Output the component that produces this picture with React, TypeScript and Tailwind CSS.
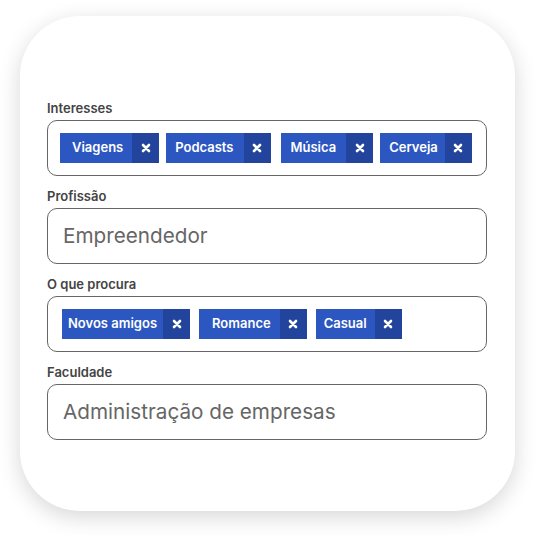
import React from "react";

const X = () => (
  <svg width="10" height="10" viewBox="0 0 10 10">
    <path d="M2 2 L8 8 M8 2 L2 8" stroke="white" strokeWidth="2.6" strokeLinecap="round" />
  </svg>
);

function Tag({ label, pl, pr }: { label: string; pl: string; pr: string }) {
  return (
    <div className="flex h-[30px] items-stretch">
      <div className={`flex items-center bg-[#2c57c1] text-white text-[13px] font-semibold ${pl} ${pr}`}>
        {label}
      </div>
      <div className="flex w-[27px] items-center justify-center bg-[#22449c]">
        <X />
      </div>
    </div>
  );
}

function Label({ children }: { children: React.ReactNode }) {
  return (
    <div className="h-[16px] text-[13px] font-semibold leading-[16px] text-[#444]">{children}</div>
  );
}

export default function App() {
  return (
    <div
      className="h-[535px] w-[535px] bg-white pt-[16px] pl-[20px]"
      style={{ fontFamily: "Inter, 'Noto Sans', sans-serif" }}
    >
      <div className="h-[495px] w-[495px] rounded-[60px] bg-white pl-[27px] pt-[84px] shadow-[0_6px_22px_rgba(0,0,0,0.16)]">
        <div className="flex w-[440px] flex-col">
          <Label>Interesses</Label>
          <div className="mt-[4px] flex h-[56px] items-center rounded-[10px] border border-[#666] pl-[12px]">
            <Tag label="Viagens" pl="pl-[12px]" pr="pr-[9px]" />
            <div className="w-[7px]" />
            <Tag label="Podcasts" pl="pl-[9px]" pr="pr-[10px]" />
            <div className="w-[10px]" />
            <Tag label="Música" pl="pl-[10px]" pr="pr-[10px]" />
            <div className="w-[7px]" />
            <Tag label="Cerveja" pl="pl-[9px]" pr="pr-[7px]" />
          </div>

          <div className="mt-[12px]">
            <Label>Profissão</Label>
          </div>
          <div className="mt-[4px] flex h-[56px] items-center rounded-[10px] border border-[#666] pl-[15px] text-[20.7px] text-[#666]">
            Empreendedor
          </div>

          <div className="mt-[12px]">
            <Label>O que procura</Label>
          </div>
          <div className="mt-[4px] flex h-[56px] items-center rounded-[10px] border border-[#666] pl-[14px]">
            <Tag label="Novos amigos" pl="pl-[6px]" pr="pr-[6px]" />
            <div className="w-[9px]" />
            <Tag label="Romance" pl="pl-[13px]" pr="pr-[9px]" />
            <div className="w-[9px]" />
            <Tag label="Casual" pl="pl-[8px]" pr="pr-[8px]" />
          </div>

          <div className="mt-[12px]">
            <Label>Faculdade</Label>
          </div>
          <div className="mt-[4px] flex h-[56px] items-center rounded-[10px] border border-[#666] pl-[15px] text-[20.7px] text-[#666]">
            Administração de empresas
          </div>
        </div>
      </div>
    </div>
  );
}
